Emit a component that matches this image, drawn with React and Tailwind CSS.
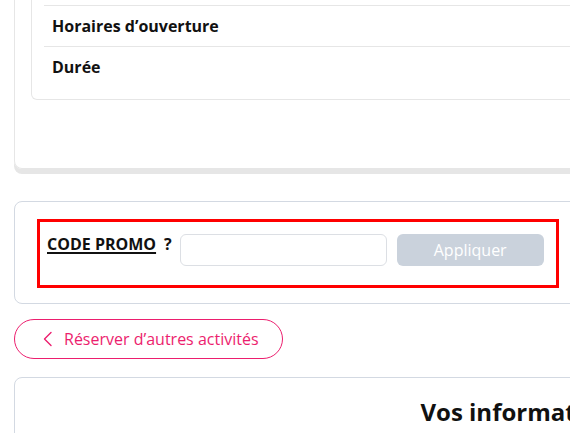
import React from 'react';

const ROWS = ['Lieu', 'Horaires d’ouverture', 'Durée'];

const ChevronLeft = () => (
  <svg width="11" height="16" viewBox="0 0 11 16" fill="none" className="shrink-0">
    <path d="M9 1.5 2.5 8 9 14.5" stroke="#ec1e6e" strokeWidth="1.4" strokeLinecap="round" strokeLinejoin="round" />
  </svg>
);

export default function App() {
  return (
    <div className="w-[570px] h-[433px] overflow-hidden bg-white font-['Open_Sans',sans-serif] text-[#111]">
      <div className="w-[1032px] pl-[14px] -mt-[36px]">
        {/* details card */}
        <div className="border border-t-0 border-[#e6e6e6] rounded-b-lg shadow-[0_5px_0_#e6e6e6] pl-4 pb-[68px]">
          <div className="border border-t-0 border-[#e6e6e6] rounded-b-md pb-3">
            <div className="mx-3">
              {ROWS.map((r, i) => (
                <div
                  key={r}
                  className={`h-[41px] flex items-center pl-2 font-bold text-[16px] ${i > 0 ? 'border-t border-[#e6e6e6]' : ''}`}
                >
                  {r}
                </div>
              ))}
            </div>
          </div>
        </div>

        {/* promo */}
        <div className="mt-[32px] border border-[#d3d9e2] rounded-lg pl-[22px] pt-[17px] pb-[15px]">
          <div className="w-[522px] border-[3px] border-[#ff0000] pl-[7px] pt-3 pb-[19px] flex items-start">
            <span className="font-bold text-[16px] leading-5 underline underline-offset-2 decoration-[1.5px]">
              CODE PROMO
            </span>
            <span className="font-bold text-[16px] leading-5 ml-[8px]">?</span>
            <input
              type="text"
              className="ml-[8px] w-[207px] h-8 border border-[#dcdfe4] rounded-md bg-white outline-none"
            />
            <button className="ml-[10px] w-[147px] h-8 rounded-md bg-[#cad2dc] text-white text-[16px]">
              Appliquer
            </button>
          </div>
        </div>

        {/* back button */}
        <button className="mt-[15px] w-[269px] h-10 rounded-full border-[1.5px] border-[#ec1e6e] text-[#ec1e6e] text-[16px] flex items-center pl-[27px] gap-[11px]">
          <ChevronLeft />
          <span>Réserver d’autres activités</span>
        </button>

        {/* info card */}
        <div className="mt-[18px] border border-[#d3d9e2] rounded-lg pt-[18px] h-[200px]">
          <h2 className="text-center font-bold text-[24px] leading-8">Vos informations</h2>
        </div>
      </div>
    </div>
  );
}
